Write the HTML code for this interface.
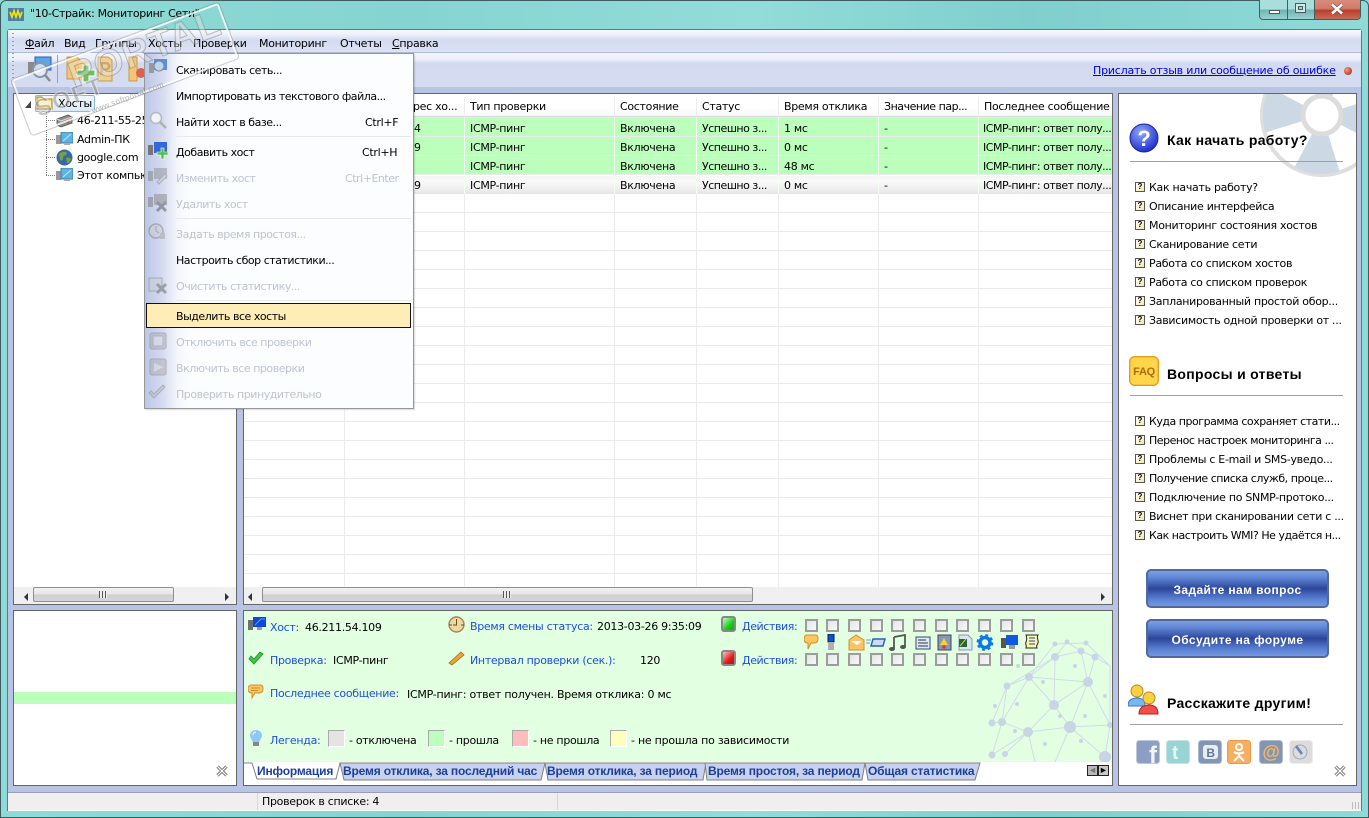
<!DOCTYPE html>
<html lang="ru"><head><meta charset="utf-8"><title>10-Страйк: Мониторинг Сети</title>
<style>
html,body{margin:0;padding:0;background:#fff}
#w{position:relative;width:1369px;height:818px;overflow:hidden;background:linear-gradient(90deg,#8edad6 0,#86d4d2 30%,#92dcd9 55%,#7fcfce 75%,#8fdad7 100%);font:11px/14px "DejaVu Sans","Liberation Sans",sans-serif;letter-spacing:-.3px;color:#000}
#w div,#w span,#w svg{position:absolute}
.t{white-space:nowrap;margin-top:1px}
.m{letter-spacing:-.47px}
.b{color:#1d4fd8}
.dis{color:#bcc4d2}
.hd{font:bold 14px/18px "Liberation Sans",sans-serif;letter-spacing:.3px;margin-top:0}
.pn{background:#fff;border:1px solid #666;box-sizing:border-box}
.cb{width:13px;height:13px;box-sizing:border-box;border:2px solid #9c9c9c;background:linear-gradient(135deg,#e4e4e4,#f8f8f8);outline:0}
.q{width:10px;height:10px;box-sizing:border-box;border:1px solid #555;background:linear-gradient(135deg,#fff,#f2e9a8);font:bold 8px/8px "Liberation Sans",sans-serif;text-align:center;letter-spacing:0}
.sw{width:17px;height:17px;box-sizing:border-box;border:1px solid #aaa;border-right-color:#fff;border-bottom-color:#fff}
.tab{font:bold 12px/14px "Liberation Sans",sans-serif;color:#1b3f9b;letter-spacing:-.17px;white-space:nowrap}
.h{height:14px;top:99px;white-space:nowrap;background:none}
.btn{left:1146px;width:183px;height:39px;box-sizing:border-box;border:2px solid #54679c;border-radius:5px;background:linear-gradient(#7c9fe6 0,#5e84d4 20%,#2c4699 50%,#5a80d2 80%,#7399e2 100%);color:#fff;font:bold 12px/39px "Liberation Sans",sans-serif;text-align:center;letter-spacing:.4px}
.grn{left:244px;width:868px;height:18px;background:#bcffbc}
.wm{transform:translate(-50%,-50%) rotate(-20.5deg);white-space:nowrap}
</style></head><body>
<div id="w">

<!-- outer frame -->
<div style="left:0;top:0;width:1369px;height:818px;box-sizing:border-box;border:1px solid #3e5c60;border-radius:6px 6px 0 0"></div>

<!-- title bar -->
<svg style="left:8px;top:8px" width="16" height="13" viewBox="0 0 16 13"><rect width="16" height="13" fill="#5878a8"/><rect x="1" y="1" width="14" height="11" fill="#3f7fb4"/><path d="M2 4l2 5 2-6 2 6 2-6 2 6 2-5" fill="none" stroke="#f6e400" stroke-width="1.7"/></svg>
<span class="t" style="left:30px;top:6px;font-size:11px;letter-spacing:-.35px">"10-Страйк: Мониторинг Сети"</span>

<!-- window buttons -->
<div style="left:1259px;top:0;width:102px;height:20px;box-sizing:border-box;border:1px solid #3f5f62;border-top:0;border-radius:0 0 4px 4px;background:linear-gradient(#a9dedc 0,#a9dedc 48%,#6fb3b2 52%,#9ad2d0 100%);overflow:hidden">
<div style="left:27px;top:0;width:1px;height:19px;background:#3f5f62"></div>
<div style="left:54px;top:0;width:1px;height:19px;background:#3f5f62"></div>
<div style="left:55px;top:0;width:47px;height:19px;background:linear-gradient(#d88c7c 0,#d27a68 45%,#b8402c 55%,#c86a58 100%)"></div>
<div style="left:9px;top:10px;width:11px;height:4px;box-sizing:border-box;border:1px solid #4a5b5c;background:#fff"></div>
<div style="left:35px;top:3px;width:11px;height:10px;box-sizing:border-box;border:1px solid #4a5b5c;background:#cfe9e8"></div>
<div style="left:38px;top:6px;width:5px;height:4px;box-sizing:border-box;border:1px solid #4a5b5c;background:#9fd2d0"></div>
<svg style="left:70px;top:3px" width="14" height="12" viewBox="0 0 14 12"><path d="M2 1.500l10 9M12 1.500l-10 9" stroke="#7a4a40" stroke-width="4"/><path d="M2 1.500l10 9M12 1.500l-10 9" stroke="#fff" stroke-width="2.600"/></svg>
</div>

<!-- client -->
<div style="left:7px;top:29px;width:1355px;height:782px;background:#b9c3e3;border:1px solid #5a7c80;box-sizing:border-box;border-radius:3px 3px 0 0"></div>

<!-- menu bar -->
<div style="left:8px;top:30px;width:1353px;height:22px;background:linear-gradient(#f7f9fd 0,#eef1fa 20%,#d4dbf0 45%,#dde2f4 100%);border-bottom:1px solid #aeb8d8"></div>
<span class="t" style="left:25px;top:36px"><u>Ф</u>айл</span>
<span class="t" style="left:64px;top:36px">Вид</span>
<span class="t" style="left:95px;top:36px">Группы</span>
<span class="t" style="left:148px;top:36px">Хосты</span>
<span class="t" style="left:193px;top:36px">Проверки</span>
<span class="t" style="left:259px;top:36px">Мониторинг</span>
<span class="t" style="left:340px;top:36px">Отчеты</span>
<span class="t" style="left:392px;top:36px"><u>С</u>правка</span>

<!-- toolbar -->
<div style="left:8px;top:53px;width:1353px;height:34px;background:linear-gradient(#f3f5fb 0,#eef0f9 18%,#d3daef 30%,#d5dcf0 100%)"></div>
<div style="left:12px;top:33px;width:2px;height:52px;background:repeating-linear-gradient(#9aa0b4 0,#9aa0b4 1px,transparent 1px,transparent 4px)"></div>
<svg style="left:26px;top:55px" width="26" height="28" viewBox="0 0 26 28"><rect x="2" y="7" width="6" height="12" fill="#8a8a8a"/><rect x="9" y="2" width="16" height="13" fill="#5ea4e8" stroke="#2a5ea8"/><circle cx="14" cy="15" r="7" fill="#e8eef6" fill-opacity=".8" stroke="#8a96a8" stroke-width="2"/><path d="M19 20l5 6" stroke="#8a8a8a" stroke-width="2.500"/></svg>
<div style="left:57px;top:55px;width:1px;height:28px;background:#9aa3bc"></div>
<svg style="left:66px;top:54px" width="80" height="30" viewBox="0 0 80 30"><path d="M1 3h10l3 3v19H1z" fill="#f4c674" stroke="#c89a4a"/><path d="M13 7h8v18h-8z" fill="#f2cf8c"/><path d="M11 16h6v-5h6v5h6v6h-6v6h-6v-6h-6z" fill="#6cc060" stroke="#fff"/><path d="M32 3h10l4 3v21H32z" fill="#f0d090" stroke="#c89a4a"/><text x="33" y="21" font-family="Liberation Sans" font-size="18" font-weight="bold" fill="#c8a878">P</text><path d="M63 3h8v24h-8z" fill="#f4c674" stroke="#c89a4a"/><circle cx="75" cy="19" r="5" fill="#e06050"/></svg>
<span class="t" style="left:1093px;top:63px;color:#0000e8;text-decoration:underline;letter-spacing:-.2px">Прислать отзыв или сообщение об ошибке</span>
<div style="left:1344px;top:67px;width:8px;height:8px;border-radius:50%;background:radial-gradient(circle at 35% 35%,#f0a080,#c83a20 70%)"></div>

<!-- tree panel -->
<div class="pn" style="left:13px;top:93px;width:224px;height:512px;overflow:hidden"></div>
<div style="left:35px;top:95px;width:60px;height:17px;box-sizing:border-box;border:1px solid #8ab8dc;border-radius:2px;background:linear-gradient(#f2f8fd,#d8eaf8)"></div>
<svg style="left:24px;top:100px" width="9" height="9" viewBox="0 0 9 9"><path d="M7 1v7H1z" fill="#444"/></svg>
<svg style="left:36px;top:95px" width="17" height="15" viewBox="0 0 17 15"><path d="M1 2h5l2 2h8v10H1z" fill="#f6dc8c" stroke="#b08020"/><path d="M2 6h13v7H2z" fill="#fff0b8"/></svg>
<span class="t" style="left:58px;top:96px">Хосты</span>
<div style="left:46px;top:112px;width:1px;height:63px;background:repeating-linear-gradient(#777 0,#777 1px,transparent 1px,transparent 2px)"></div>
<div style="left:46px;top:120px;width:10px;height:1px;background:repeating-linear-gradient(90deg,#777 0,#777 1px,transparent 1px,transparent 2px)"></div>
<div style="left:46px;top:139px;width:10px;height:1px;background:repeating-linear-gradient(90deg,#777 0,#777 1px,transparent 1px,transparent 2px)"></div>
<div style="left:46px;top:157px;width:10px;height:1px;background:repeating-linear-gradient(90deg,#777 0,#777 1px,transparent 1px,transparent 2px)"></div>
<div style="left:46px;top:175px;width:10px;height:1px;background:repeating-linear-gradient(90deg,#777 0,#777 1px,transparent 1px,transparent 2px)"></div>
<svg style="left:56px;top:113px" width="17" height="15" viewBox="0 0 17 15"><path d="M1 6l11-4 4 2v6L5 14 1 12z" fill="#8f8f8f" stroke="#444" stroke-width=".8"/><path d="M1 6l4 2 11-4" fill="none" stroke="#ddd"/><circle cx="12" cy="9" r="1.300" fill="#e03020"/></svg>
<svg style="left:56px;top:132px" width="17" height="14" viewBox="0 0 17 14"><rect x="0" y="3" width="5" height="9" fill="#999"/><rect x="5" y="0" width="12" height="11" fill="#59b4e8" stroke="#4a7a9c"/><path d="M7 9l8-7" stroke="#bfe6f8"/><rect x="8" y="11" width="6" height="2" fill="#aaa"/></svg>
<svg style="left:56px;top:149px" width="17" height="17" viewBox="0 0 17 17"><circle cx="8.500" cy="8.500" r="8" fill="#3868a8"/><path d="M3 5c3-3 6-3 8-1-1 3-4 2-4 5s-2 3-3 2zM10 9c2-1 4 0 5 1-1 3-3 5-4 4z" fill="#7aa040"/></svg>
<svg style="left:56px;top:168px" width="17" height="14" viewBox="0 0 17 14"><rect x="0" y="3" width="5" height="9" fill="#999"/><rect x="5" y="0" width="12" height="11" fill="#59b4e8" stroke="#4a7a9c"/><path d="M7 9l8-7" stroke="#bfe6f8"/><rect x="8" y="11" width="6" height="2" fill="#aaa"/></svg>
<span class="t" style="left:77px;top:113px">46-211-55-25</span>
<span class="t" style="left:77px;top:132px">Admin-ПК</span>
<span class="t" style="left:77px;top:150px">google.com</span>
<span class="t" style="left:77px;top:168px">Этот компьютер</span>
<!-- tree scrollbar -->
<div style="left:14px;top:587px;width:222px;height:17px;background:#f0f0f0"></div>
<div style="left:24px;top:593px;width:0;height:0;border:4px solid transparent;border-left:0;border-right:4px solid #333"></div>
<div style="left:225px;top:593px;width:0;height:0;border:4px solid transparent;border-right:0;border-left:4px solid #333"></div>
<div style="left:33px;top:587px;width:141px;height:15px;box-sizing:border-box;border:1px solid #8e8f8f;border-radius:2px;background:linear-gradient(#f2f2f2 0,#e6e6e6 48%,#cfcfcf 52%,#d6d6d6 100%)"></div>
<div style="left:99px;top:591px;width:8px;height:7px;background:repeating-linear-gradient(90deg,#555 0,#555 1px,#eee 1px,#eee 3px)"></div>

<!-- lower-left panel -->
<div class="pn" style="left:13px;top:610px;width:224px;height:176px"></div>
<div style="left:14px;top:692px;width:222px;height:12px;background:#bcffbc"></div>
<svg style="left:216px;top:765px" width="12" height="12" viewBox="0 0 12 12"><path d="M1.500 1.500l9 9M10.500 1.500l-9 9" stroke="#555" stroke-width="3"/><path d="M1.500 1.500l9 9M10.500 1.500l-9 9" stroke="#fff" stroke-width="1.300"/></svg>

<!-- main table -->
<div class="pn" style="left:243px;top:93px;width:870px;height:512px;overflow:hidden"></div>
<div style="left:244px;top:94px;width:868px;height:493px;background:repeating-linear-gradient(transparent 0,transparent 18px,#eaeaea 18px,#eaeaea 19px);background-position:0 5px"></div>
<div style="left:244px;top:97px;width:868px;height:19px;background:linear-gradient(#fff 0,#fff 50%,#f7f8f9 100%);border-bottom:1px solid #d8d8d8"></div>
<div style="left:344px;top:97px;width:1px;height:490px;background:#ececec"></div>
<div style="left:464px;top:97px;width:1px;height:490px;background:#ececec"></div>
<div style="left:614px;top:97px;width:1px;height:490px;background:#ececec"></div>
<div style="left:696px;top:97px;width:1px;height:490px;background:#ececec"></div>
<div style="left:778px;top:97px;width:1px;height:490px;background:#ececec"></div>
<div style="left:878px;top:97px;width:1px;height:490px;background:#ececec"></div>
<div style="left:978px;top:97px;width:1px;height:490px;background:#ececec"></div>
<div class="grn" style="top:118px"></div>
<div class="grn" style="top:137px"></div>
<div class="grn" style="top:156px"></div>
<div style="left:244px;top:176px;width:868px;height:18px;background:linear-gradient(#f4f4f4 0,#fafafa 30%,#e6e6e6 100%)"></div>
<div style="left:464px;top:118px;width:1px;height:76px;background:#f4fff4"></div>
<div style="left:614px;top:118px;width:1px;height:76px;background:#f4fff4"></div>
<div style="left:696px;top:118px;width:1px;height:76px;background:#f4fff4"></div>
<div style="left:778px;top:118px;width:1px;height:76px;background:#f4fff4"></div>
<div style="left:878px;top:118px;width:1px;height:76px;background:#f4fff4"></div>
<div style="left:978px;top:118px;width:1px;height:76px;background:#f4fff4"></div>

<span class="t h" style="left:413px">рес хо...</span>
<span class="t h" style="left:470px">Тип проверки</span>
<span class="t h" style="left:620px">Состояние</span>
<span class="t h" style="left:702px">Статус</span>
<span class="t h" style="left:784px">Время отклика</span>
<span class="t h m" style="left:884px">Значение пар...</span>
<span class="t h" style="left:984px">Последнее сообщение</span>

<span class="t" style="left:414px;top:121px">4</span><span class="t" style="left:470px;top:121px">ICMP-пинг</span><span class="t" style="left:620px;top:121px">Включена</span><span class="t m" style="left:702px;top:121px">Успешно з...</span><span class="t" style="left:784px;top:121px">1 мс</span><span class="t" style="left:884px;top:121px">-</span><span class="t m" style="left:983px;top:121px">ICMP-пинг: ответ полу...</span>
<span class="t" style="left:414px;top:140px">9</span><span class="t" style="left:470px;top:140px">ICMP-пинг</span><span class="t" style="left:620px;top:140px">Включена</span><span class="t m" style="left:702px;top:140px">Успешно з...</span><span class="t" style="left:784px;top:140px">0 мс</span><span class="t" style="left:884px;top:140px">-</span><span class="t m" style="left:983px;top:140px">ICMP-пинг: ответ полу...</span>
<span class="t" style="left:470px;top:159px">ICMP-пинг</span><span class="t" style="left:620px;top:159px">Включена</span><span class="t m" style="left:702px;top:159px">Успешно з...</span><span class="t" style="left:784px;top:159px">48 мс</span><span class="t" style="left:884px;top:159px">-</span><span class="t m" style="left:983px;top:159px">ICMP-пинг: ответ полу...</span>
<span class="t" style="left:414px;top:178px">9</span><span class="t" style="left:470px;top:178px">ICMP-пинг</span><span class="t" style="left:620px;top:178px">Включена</span><span class="t m" style="left:702px;top:178px">Успешно з...</span><span class="t" style="left:784px;top:178px">0 мс</span><span class="t" style="left:884px;top:178px">-</span><span class="t m" style="left:983px;top:178px">ICMP-пинг: ответ полу...</span>

<!-- table scrollbar -->
<div style="left:244px;top:587px;width:868px;height:17px;background:#f0f0f0"></div>
<div style="left:248px;top:593px;width:0;height:0;border:4px solid transparent;border-left:0;border-right:4px solid #333"></div>
<div style="left:1101px;top:593px;width:0;height:0;border:4px solid transparent;border-right:0;border-left:4px solid #333"></div>
<div style="left:262px;top:587px;width:491px;height:15px;box-sizing:border-box;border:1px solid #8e8f8f;border-radius:2px;background:linear-gradient(#f2f2f2 0,#e6e6e6 48%,#cfcfcf 52%,#d6d6d6 100%)"></div>
<div style="left:503px;top:591px;width:8px;height:7px;background:repeating-linear-gradient(90deg,#555 0,#555 1px,#eee 1px,#eee 3px)"></div>

<!-- info panel -->
<div class="pn" style="left:243px;top:610px;width:870px;height:176px"></div>
<div style="left:244px;top:611px;width:868px;height:151px;background:#e2ffe2"></div>
<svg style="left:985px;top:636px" width="127" height="126" viewBox="0 0 127 126"><g stroke="#d2daec" stroke-width="1" fill="none"><path d="M85 91L43 96 69 69 103 46 44 41 70 21 96 15 110 21 103 46 85 91 125 89 103 46M69 69L85 91M69 69L44 41M69 69L103 46M43 96L17 86 22 50 44 41M43 96L20 118M43 96L50 126M85 91L120 121M85 91L70 126M43 96L7 119M17 86L7 87M17 86L44 41M22 50L7 87M22 50L70 21M44 41L70 8 101 7 125 30M70 21L82 6 96 15 110 21 125 30 125 89M70 21L69 69M96 15L103 46M120 121L125 89M17 86L7 119"/></g><g fill="#c8d5e4"><circle cx="85" cy="91" r="6"/><circle cx="43" cy="96" r="5"/><circle cx="69" cy="69" r="5"/><circle cx="103" cy="46" r="5"/><circle cx="44" cy="41" r="4"/><circle cx="70" cy="21" r="4"/><circle cx="96" cy="15" r="3.500"/><circle cx="110" cy="21" r="3.500"/><circle cx="22" cy="50" r="3.500"/><circle cx="17" cy="86" r="4"/><circle cx="7" cy="87" r="3.500"/><circle cx="120" cy="121" r="6"/><circle cx="7" cy="119" r="3.500"/><circle cx="20" cy="118" r="3"/><circle cx="82" cy="6" r="2.500"/><circle cx="101" cy="7" r="2.500"/><circle cx="70" cy="8" r="2.500"/><circle cx="125" cy="89" r="3"/><circle cx="58" cy="46" r="2"/><circle cx="90" cy="30" r="2"/><circle cx="33" cy="30" r="2"/><circle cx="120" cy="60" r="2"/><circle cx="100" cy="80" r="2"/><circle cx="60" cy="108" r="2"/><circle cx="75" cy="80" r="2"/><circle cx="32" cy="68" r="2"/><circle cx="96" cy="105" r="2"/><circle cx="10" cy="70" r="2"/><circle cx="30" cy="95" r="2"/></g></svg>

<svg style="left:248px;top:617px" width="18" height="15" viewBox="0 0 18 15"><rect x="0" y="3" width="5" height="10" fill="#707070"/><rect x="5" y="0" width="13" height="10" fill="#1048d8"/><path d="M7 8l6-6h4" stroke="#4aa0f8" fill="none"/><rect x="9" y="10" width="5" height="3" fill="#999"/></svg>
<span class="t b" style="left:270px;top:620px">Хост:</span>
<span class="t" style="left:305px;top:620px">46.211.54.109</span>
<svg style="left:448px;top:616px" width="17" height="17" viewBox="0 0 17 17"><circle cx="8.500" cy="8.500" r="7.500" fill="#f0d8a0" stroke="#a08858" stroke-width="1.400"/><path d="M8.500 3v6H5M1 9h3M13 9h3" stroke="#553" fill="none"/></svg>
<span class="t b" style="left:470px;top:619px">Время смены статуса:</span>
<span class="t" style="left:597px;top:619px">2013-03-26 9:35:09</span>
<svg style="left:248px;top:651px" width="16" height="15" viewBox="0 0 16 15"><path d="M1 8l5 5 9-10-3-2-6 7-3-3z" fill="#40c840" stroke="#208a30" stroke-width=".8"/></svg>
<span class="t b" style="left:270px;top:653px">Проверка:</span>
<span class="t" style="left:333px;top:653px">ICMP-пинг</span>
<svg style="left:448px;top:651px" width="17" height="15" viewBox="0 0 17 15"><path d="M1 12L13 1l3 3L4 14z" fill="#e8a838" stroke="#a06a18" stroke-width=".8"/></svg>
<span class="t b" style="left:470px;top:653px">Интервал проверки (сек.):</span>
<span class="t" style="left:640px;top:653px">120</span>
<svg style="left:248px;top:684px" width="16" height="16" viewBox="0 0 16 16"><path d="M3 1h9c3 0 3 2 3 4s-1 4-4 4H7l-3 5v-5C1 9 0 7 0 5s1-4 3-4z" fill="#f8c860" stroke="#d09030"/><path d="M3 4h9M3 6.500h7" stroke="#d09030"/></svg>
<span class="t b" style="left:270px;top:686px">Последнее сообщение:</span>
<span class="t" style="left:407px;top:687px;letter-spacing:-.25px">ICMP-пинг: ответ получен. Время отклика: 0 мс</span>
<svg style="left:250px;top:730px" width="12" height="17" viewBox="0 0 12 17"><path d="M6 0c3.500 0 6 2.500 6 5.500 0 2.500-2 3.500-2.500 6.500h-7C2 9 0 8 0 5.500 0 2.500 2.500 0 6 0z" fill="#8cc8f8"/><path d="M3 5a3 3 0 0 1 3-3" stroke="#fff" fill="none"/><rect x="3" y="12" width="6" height="4" fill="#888"/></svg>
<span class="t b" style="left:270px;top:733px">Легенда:</span>
<div class="sw" style="left:328px;top:730px;background:#e4e4e4"></div>
<span class="t" style="left:349px;top:733px">- отключена</span>
<div class="sw" style="left:428px;top:730px;background:#bcffbc"></div>
<span class="t" style="left:449px;top:733px">- прошла</span>
<div class="sw" style="left:512px;top:730px;background:#ffbcbc"></div>
<span class="t" style="left:533px;top:733px">- не прошла</span>
<div class="sw" style="left:610px;top:730px;background:#ffffbc"></div>
<span class="t" style="left:631px;top:733px;letter-spacing:-.25px">- не прошла по зависимости</span>

<!-- actions -->
<div style="left:721px;top:616px;width:15px;height:16px;box-sizing:border-box;border:2px solid #888;border-radius:3px;background:linear-gradient(135deg,#c8f8c8,#18d018 60%,#10a810)"></div>
<div style="left:721px;top:650px;width:15px;height:16px;box-sizing:border-box;border:2px solid #888;border-radius:3px;background:linear-gradient(135deg,#f8c8c8,#e81818 60%,#b01010)"></div>
<span class="t b" style="left:742px;top:619px;letter-spacing:-.4px">Действия:</span>
<span class="t b" style="left:742px;top:653px;letter-spacing:-.4px">Действия:</span>
<div class="cb" style="left:805px;top:619px"></div><div class="cb" style="left:826px;top:619px"></div><div class="cb" style="left:848px;top:619px"></div><div class="cb" style="left:870px;top:619px"></div><div class="cb" style="left:891px;top:619px"></div><div class="cb" style="left:913px;top:619px"></div><div class="cb" style="left:935px;top:619px"></div><div class="cb" style="left:956px;top:619px"></div><div class="cb" style="left:978px;top:619px"></div><div class="cb" style="left:1000px;top:619px"></div><div class="cb" style="left:1022px;top:619px"></div>
<div class="cb" style="left:805px;top:653px"></div><div class="cb" style="left:826px;top:653px"></div><div class="cb" style="left:848px;top:653px"></div><div class="cb" style="left:870px;top:653px"></div><div class="cb" style="left:891px;top:653px"></div><div class="cb" style="left:913px;top:653px"></div><div class="cb" style="left:935px;top:653px"></div><div class="cb" style="left:956px;top:653px"></div><div class="cb" style="left:978px;top:653px"></div><div class="cb" style="left:1000px;top:653px"></div><div class="cb" style="left:1022px;top:653px"></div>
<svg style="left:804px;top:634px" width="240" height="17" viewBox="0 0 240 17">
<path d="M3 1h8c3 0 3 2 3 4s-1 4-4 4H7l-3 6v-6C1 9 0 7 0 5s1-4 3-4z" fill="#f8c860" stroke="#d09030"/>
<rect x="24" y="0" width="6" height="8" fill="#0850d8" stroke="#123"/><rect x="24" y="8" width="6" height="8" fill="#b0b0b0"/>
<path d="M45 6l7-5 8 5v10H45z" fill="#f8c468" stroke="#d09030"/><path d="M47 7h11l-5 4z" fill="#fff"/>
<path d="M69 5h12l-2 7H67z" fill="#c8dcf4" stroke="#2a5ea8" stroke-width="1.400"/><path d="M62 6h5M62 9h4" stroke="#6a9ad8"/>
<path d="M90 3l11-2v12M90 3v12" stroke="#555" stroke-width="1.800" fill="none"/><ellipse cx="88" cy="15" rx="3" ry="2" fill="#555"/><ellipse cx="99" cy="13" rx="3" ry="2" fill="#555"/>
<rect x="112" y="3" width="14" height="12" fill="#dfe8f6" stroke="#34486c"/><path d="M114 6h8M114 9h10M114 12h10" stroke="#334"/>
<rect x="134" y="1" width="13" height="15" fill="#8898b8" stroke="#445"/><path d="M140 4l4 7h-8z" fill="#f8d030"/><circle cx="140" cy="13" r="1.800" fill="#d04030"/>
<path d="M155 1h9l4 4v11h-13z" fill="#dce4f0" stroke="#8898b8"/><rect x="155" y="5" width="8" height="8" fill="#206840"/><path d="M156 12l6-7" stroke="#f0c020"/>
<circle cx="181" cy="8.500" r="5" fill="none" stroke="#0a78e8" stroke-width="3.500"/><circle cx="181" cy="8.500" r="7.500" fill="none" stroke="#0a78e8" stroke-width="1.800" stroke-dasharray="3 2.900"/>
<rect x="197" y="4" width="5" height="10" fill="#555"/><rect x="202" y="1" width="12" height="10" fill="#1058e0"/><rect x="205" y="11" width="6" height="4" fill="#999"/>
<path d="M222 1h12c-2 3 1 5 0 8-1 2-2 3-1 5h-11c1-2-1-4 0-6s1-4 0-7z" fill="#fff4a0" stroke="#223"/><path d="M225 4h6M225 7h6M225 10h6" stroke="#1848c8"/>
</svg>

<!-- tabs -->
<div style="left:244px;top:762px;width:868px;height:23px;background:#fff"></div>
<svg style="left:244px;top:762px" width="868" height="20" viewBox="0 0 868 20">
<path d="M96 1L100 18H297L301 1Z" fill="#c8d2ec" stroke="#808080"/>
<path d="M301 1L304 18H459L462 1Z" fill="#c8d2ec" stroke="#808080"/>
<path d="M461 1L463 18H618L621 1Z" fill="#c8d2ec" stroke="#808080"/>
<path d="M621 1L624 18H731L736 1Z" fill="#c8d2ec" stroke="#808080"/>
<path d="M0 1H8L13 17H92L96 1" fill="#fff" stroke="#808080"/>
</svg>
<span class="tab" style="left:257px;top:764px">Информация</span>
<span class="tab" style="left:343px;top:764px">Время отклика, за последний час</span>
<span class="tab" style="left:547px;top:764px">Время отклика, за период</span>
<span class="tab" style="left:708px;top:764px">Время простоя, за период</span>
<span class="tab" style="left:868px;top:764px">Общая статистика</span>
<div style="left:1087px;top:765px;width:11px;height:11px;box-sizing:border-box;border:1px solid #222;background:#b8b8b8;color:#777;font:bold 9px/9px 'Liberation Sans',sans-serif;letter-spacing:0;text-align:center">◄</div>
<div style="left:1098px;top:765px;width:11px;height:11px;box-sizing:border-box;border:1px solid #222;background:#c8c8c8;color:#000;font:bold 9px/9px 'Liberation Sans',sans-serif;letter-spacing:0;text-align:center">►</div>

<!-- right panel -->
<div class="pn" style="left:1118px;top:93px;width:239px;height:693px;overflow:hidden">
<svg style="left:141px;top:-41px" width="124" height="124" viewBox="-62 -62 124 124"><circle r="60" fill="#fff" stroke="#dedede" stroke-width="4"/><g transform="rotate(-17.500)"><circle r="39" fill="none" stroke="#ccd8e4" stroke-width="40" stroke-dasharray="30.630 30.630"/></g><circle r="19" fill="#fff" stroke="#dcdcdc" stroke-width="5"/></svg>
</div>
<svg style="left:1129px;top:123px" width="30" height="30" viewBox="0 0 30 30"><defs><radialGradient id="qg" cx=".4" cy=".3" r=".8"><stop offset="0" stop-color="#90a8f8"/><stop offset="1" stop-color="#1020c8"/></radialGradient></defs><circle cx="15" cy="15" r="14" fill="url(#qg)" stroke="#182894"/><text x="15" y="23" text-anchor="middle" font-family="Liberation Sans" font-size="22" font-weight="bold" fill="#fff">?</text></svg>
<span class="t hd" style="left:1167px;top:131px">Как начать работу?</span>
<div style="left:1130px;top:161px;width:213px;height:1px;background:#a0a0a0"></div>
<div class="q" style="left:1135px;top:182px">?</div><span class="t" style="left:1149px;top:180px">Как начать работу?</span>
<div class="q" style="left:1135px;top:201px">?</div><span class="t" style="left:1149px;top:199px">Описание интерфейса</span>
<div class="q" style="left:1135px;top:220px">?</div><span class="t" style="left:1149px;top:218px">Мониторинг состояния хостов</span>
<div class="q" style="left:1135px;top:239px">?</div><span class="t" style="left:1149px;top:237px">Сканирование сети</span>
<div class="q" style="left:1135px;top:258px">?</div><span class="t" style="left:1149px;top:256px">Работа со списком хостов</span>
<div class="q" style="left:1135px;top:277px">?</div><span class="t" style="left:1149px;top:275px">Работа со списком проверок</span>
<div class="q" style="left:1135px;top:296px">?</div><span class="t" style="left:1149px;top:294px">Запланированный простой обор...</span>
<div class="q" style="left:1135px;top:315px">?</div><span class="t" style="left:1149px;top:313px">Зависимость одной проверки от ...</span>

<svg style="left:1129px;top:356px" width="30" height="30" viewBox="0 0 30 30"><rect x=".7" y=".7" width="28.600" height="28.600" rx="5" fill="#ffd54a" stroke="#e89a20" stroke-width="1.400"/><text x="15" y="19" text-anchor="middle" font-family="Liberation Sans" font-size="11" font-weight="bold" fill="#b06a10">FAQ</text></svg>
<span class="t hd" style="left:1167px;top:365px">Вопросы и ответы</span>
<div style="left:1130px;top:395px;width:213px;height:1px;background:#a0a0a0"></div>
<div class="q" style="left:1135px;top:416px">?</div><span class="t m" style="left:1149px;top:414px">Куда программа сохраняет стати...</span>
<div class="q" style="left:1135px;top:435px">?</div><span class="t m" style="left:1149px;top:433px">Перенос настроек мониторинга ...</span>
<div class="q" style="left:1135px;top:454px">?</div><span class="t" style="left:1149px;top:452px">Проблемы с E-mail и SMS-уведо...</span>
<div class="q" style="left:1135px;top:473px">?</div><span class="t m" style="left:1149px;top:471px">Получение списка служб, проце...</span>
<div class="q" style="left:1135px;top:492px">?</div><span class="t" style="left:1149px;top:490px">Подключение по SNMP-протоко...</span>
<div class="q" style="left:1135px;top:511px">?</div><span class="t" style="left:1149px;top:509px">Виснет при сканировании сети с ...</span>
<div class="q" style="left:1135px;top:530px">?</div><span class="t m" style="left:1149px;top:528px">Как настроить WMI? Не удаётся н...</span>

<div class="btn" style="top:569px">Задайте нам вопрос</div>
<div class="btn" style="top:619px">Обсудите на форуме</div>

<svg style="left:1128px;top:684px" width="31" height="31" viewBox="0 0 31 31"><circle cx="9" cy="7" r="6" fill="#f8d040" stroke="#b88a20"/><path d="M0 22c0-6 4-8 9-8s8 2 8 8z" fill="#78b8f0" stroke="#3a78c0"/><circle cx="21" cy="14" r="6" fill="#f8d040" stroke="#b88a20"/><path d="M11 30c0-6 4-9 10-9s9 3 9 9z" fill="#f05048" stroke="#b82020"/></svg>
<span class="t hd" style="left:1167px;top:694px">Расскажите другим!</span>
<div style="left:1130px;top:724px;width:213px;height:1px;background:#a0a0a0"></div>

<svg style="left:1136px;top:740px" width="180" height="25" viewBox="0 0 180 25">
<rect x=".5" y=".5" width="23" height="23" rx="3" fill="#8c9ec4" stroke="#c0c8d8"/><text x="13" y="23" font-family="Liberation Sans" font-size="24" font-weight="bold" fill="#f2f4f8">f</text>
<rect x="30.500" y=".5" width="23" height="23" rx="3" fill="#98d4d4" stroke="#c8e0e0"/><text x="36" y="19" font-family="Liberation Sans" font-size="19" font-weight="bold" fill="#e8f8fa">t</text>
<rect x="62.500" y=".5" width="23" height="23" rx="3" fill="#8296b4" stroke="#b0bccc"/><rect x="67" y="5" width="15" height="14" rx="3" fill="#e8ecf2"/><text x="74.500" y="17" text-anchor="middle" font-family="Liberation Sans" font-size="12" font-weight="bold" fill="#607898">B</text>
<rect x="91.500" y=".5" width="23" height="23" rx="3" fill="#f8b060" stroke="#e89848"/><circle cx="103" cy="7" r="3" fill="none" stroke="#fff" stroke-width="2"/><path d="M98 12c3 2 7 2 10 0M103 13v3M98 21l5-5 5 5" fill="none" stroke="#fff" stroke-width="2"/>
<rect x="123.500" y=".5" width="23" height="23" rx="3" fill="#8296b4" stroke="#b0bccc"/><text x="135" y="18" text-anchor="middle" font-family="Liberation Sans" font-size="18" font-weight="bold" fill="#f4b860">@</text>
<rect x="153.500" y=".5" width="23" height="23" rx="3" fill="#dcdcdc" stroke="#eee"/><circle cx="164" cy="12" r="7" fill="none" stroke="#98a8c8"/><path d="M161 5l6 8-2 2-6-8z" fill="#7088b8"/>
</svg>
<svg style="left:1334px;top:765px" width="12" height="12" viewBox="0 0 12 12"><path d="M1.500 1.500l9 9M10.500 1.500l-9 9" stroke="#555" stroke-width="3"/><path d="M1.500 1.500l9 9M10.500 1.500l-9 9" stroke="#fff" stroke-width="1.300"/></svg>

<!-- status bar -->
<div style="left:8px;top:792px;width:1353px;height:18px;background:#f0eeee;border-top:1px solid #9aa0b0;box-sizing:border-box"></div>
<div style="left:8px;top:810px;width:1353px;height:1px;background:#fff"></div>
<div style="left:257px;top:793px;width:1px;height:17px;background:#d8d6d6"></div>
<div style="left:557px;top:793px;width:1px;height:17px;background:#d8d6d6"></div>
<span class="t" style="left:262px;top:794px">Проверок в списке: 4</span>
<div style="left:1352px;top:802px;width:8px;height:7px;background:repeating-linear-gradient(90deg,#bbb 0,#bbb 1px,transparent 1px,transparent 3px)"></div>

<!-- dropdown menu -->
<div style="left:144px;top:53px;width:270px;height:356px;box-sizing:border-box;border:1px solid #979797;background:linear-gradient(90deg,#bcc6e6 0,#d6dcf0 18px,#f4f6fc 32px,#fcfdff 45px);box-shadow:1px 1px 1px rgba(0,0,0,.15)"></div>
<div style="left:176px;top:136px;width:235px;height:1px;background:#e6e8ee"></div>
<div style="left:176px;top:218px;width:235px;height:1px;background:#e6e8ee"></div>
<div style="left:176px;top:300px;width:235px;height:1px;background:#e6e8ee"></div>
<div style="left:146px;top:303px;width:265px;height:25px;box-sizing:border-box;border:1px solid #111;background:#ffedb8"></div>

<svg style="left:148px;top:57px" width="20" height="20" viewBox="0 0 20 20"><rect x="1" y="6" width="5" height="10" fill="#999"/><rect x="6" y="2" width="13" height="11" fill="#5a90d8"/><circle cx="11" cy="9" r="5" fill="#e8f0f8" fill-opacity=".7" stroke="#789"/></svg>
<svg style="left:148px;top:110px" width="20" height="20" viewBox="0 0 20 20"><circle cx="8" cy="8" r="5.500" fill="#f0f4f8" stroke="#b0b8c4" stroke-width="1.500"/><path d="M12 12l6 6" stroke="#b0b0b0" stroke-width="2.500"/></svg>
<svg style="left:148px;top:141px" width="20" height="20" viewBox="0 0 20 20"><rect x="0" y="4" width="5" height="10" fill="#777"/><rect x="6" y="1" width="13" height="11" fill="#3468d8"/><path d="M9 11h4V7h3v4h4v3h-4v4h-3v-4H9z" fill="#50c050" stroke="#fff" stroke-width=".6"/></svg>
<svg style="left:148px;top:167px;opacity:.45" width="20" height="20" viewBox="0 0 20 20"><rect x="0" y="4" width="5" height="10" fill="#777"/><rect x="6" y="1" width="13" height="11" fill="#888"/><path d="M9 15l8-8 2 2-8 8z" fill="#ccc" stroke="#777"/></svg>
<svg style="left:148px;top:193px;opacity:.5" width="20" height="20" viewBox="0 0 20 20"><rect x="0" y="4" width="5" height="10" fill="#777"/><rect x="6" y="1" width="13" height="11" fill="#888"/><path d="M9 9l9 9M18 9l-9 9" stroke="#555" stroke-width="3"/></svg>
<svg style="left:148px;top:223px;opacity:.45" width="18" height="18" viewBox="0 0 18 18"><circle cx="8" cy="8" r="7" fill="#ccc" stroke="#777" stroke-width="1.500"/><path d="M8 3v5l3 2" stroke="#777" fill="none"/><rect x="12" y="10" width="5" height="6" fill="#999"/></svg>
<svg style="left:148px;top:275px;opacity:.45" width="20" height="20" viewBox="0 0 20 20"><rect x="1" y="3" width="13" height="13" fill="#ccc" stroke="#777"/><path d="M9 9l9 9M18 9l-9 9" stroke="#555" stroke-width="3"/></svg>
<svg style="left:149px;top:332px;opacity:.45" width="18" height="18" viewBox="0 0 18 18"><rect x="1" y="1" width="16" height="16" rx="2" fill="#aaa" stroke="#777"/><rect x="4" y="4" width="10" height="10" fill="#ddd" stroke="#888"/></svg>
<svg style="left:149px;top:358px;opacity:.45" width="18" height="18" viewBox="0 0 18 18"><rect x="1" y="1" width="16" height="16" rx="2" fill="#aaa" stroke="#777"/><path d="M5 14V5l9 4z" fill="#ddd"/></svg>
<svg style="left:148px;top:384px;opacity:.5" width="18" height="18" viewBox="0 0 18 18"><path d="M1 9l5 5 11-11-2-2-9 9-3-3z" fill="#bbb" stroke="#888"/></svg>

<span class="t m" style="left:176px;top:63px">Сканировать сеть...</span>
<span class="t m" style="left:176px;top:89px">Импортировать из текстового файла...</span>
<span class="t m" style="left:176px;top:115px">Найти хост в базе...</span><span class="t" style="left:365px;top:115px">Ctrl+F</span>
<span class="t m" style="left:176px;top:145px">Добавить хост</span><span class="t" style="left:362px;top:145px">Ctrl+H</span>
<span class="t m dis" style="left:176px;top:171px">Изменить хост</span><span class="t m dis" style="left:345px;top:171px">Ctrl+Enter</span>
<span class="t m dis" style="left:176px;top:197px">Удалить хост</span>
<span class="t m dis" style="left:176px;top:227px">Задать время простоя...</span>
<span class="t m" style="left:176px;top:253px">Настроить сбор статистики...</span>
<span class="t m dis" style="left:176px;top:279px">Очистить статистику...</span>
<span class="t m" style="left:176px;top:309px">Выделить все хосты</span>
<span class="t m dis" style="left:176px;top:335px">Отключить все проверки</span>
<span class="t m dis" style="left:176px;top:361px">Включить все проверки</span>
<span class="t m dis" style="left:176px;top:387px">Проверить принудительно</span>

<!-- watermark -->
<div class="wm" style="left:125px;top:69px;width:221px;height:59px;box-sizing:border-box;border:2px solid rgba(255,255,255,.8);outline:1px solid rgba(120,120,120,.4);border-radius:3px"></div>
<span class="wm" style="left:145px;top:50px;font:bold 38px/40px 'Liberation Sans',sans-serif;letter-spacing:1px;color:rgba(235,235,235,.35);-webkit-text-stroke:1px rgba(120,120,120,.45)">PORTAL</span>
<span class="wm" style="left:70px;top:98px;font:bold 24px/26px 'Liberation Sans',sans-serif;letter-spacing:2px;color:rgba(135,135,135,.5);-webkit-text-stroke:1px rgba(255,255,255,.5)">SOFT</span>
<span class="wm" style="left:128px;top:98px;font:8px/10px 'Liberation Sans',sans-serif;letter-spacing:.4px;color:rgba(120,120,120,.55)">www.softportal.com</span>

</div>
</body></html>
